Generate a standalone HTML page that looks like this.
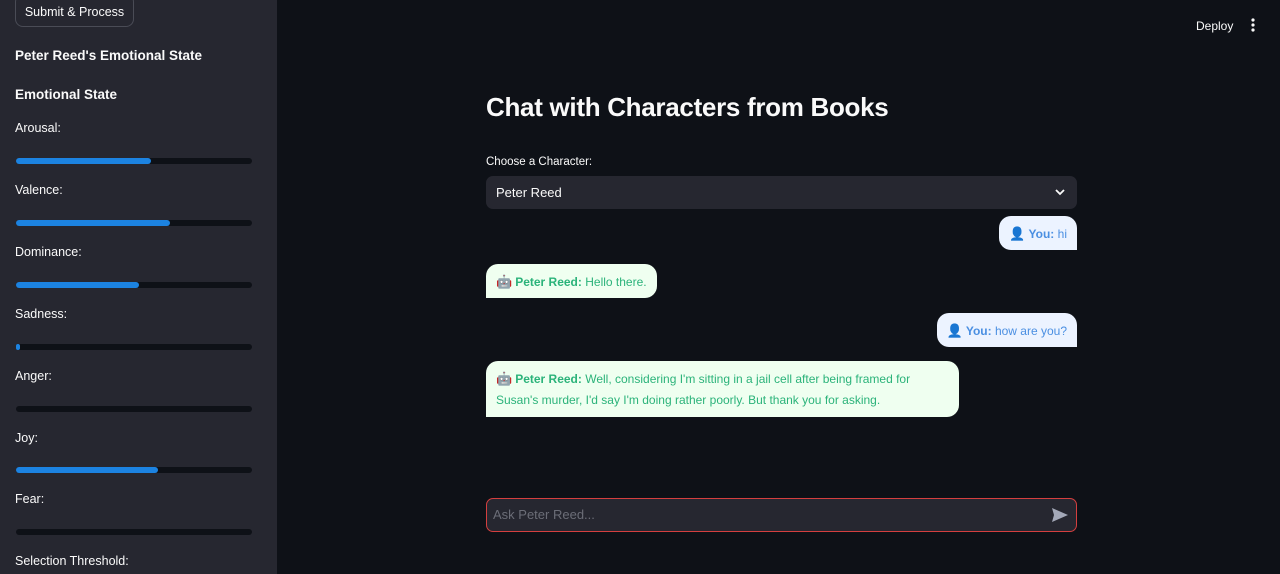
<!DOCTYPE html>
<html><head><meta charset="utf-8"><style>
*{margin:0;padding:0;box-sizing:border-box}
body{width:1280px;height:574px;overflow:hidden;background:#0e1117;font-family:"Liberation Sans",sans-serif;color:#fafafa;position:relative}
.sb{position:absolute;left:0;top:0;width:277px;height:574px;background:#262730}
.btn{position:absolute;left:15px;top:-6px;width:119px;height:33px;border:1px solid #4a4c56;border-radius:8px;font-size:12.5px;color:#fafafa;text-align:center;line-height:34px}
.h{position:absolute;left:15px;font-size:13.5px;font-weight:bold}
.lab{position:absolute;left:15px;font-size:12.5px}
.bar{position:absolute;left:16px;width:236px;height:6px;border-radius:3px;background:#0e1117}
.bar i{display:block;height:6px;border-radius:3px;background:#1c83e1}
.t{position:absolute;font-size:12px}
h1{position:absolute;left:486px;top:92px;font-size:26px;font-weight:bold;letter-spacing:-0.3px}
.sel{position:absolute;left:486px;top:176px;width:591px;height:33px;background:#262730;border-radius:7px;font-size:13px;padding-left:10px;line-height:33px}
.b{position:absolute;font-size:12px;line-height:21px;padding:7px 10px 6px}
.u{background:#ecf3ff;color:#4a8fe2;border-radius:12px 12px 0 12px}
.r{background:#effff0;color:#2bb37a;border-radius:12px 12px 12px 0}
.u b,.r b{font-weight:bold}
.ic{display:inline-block;font-size:13px;margin-right:3px}
.inp{position:absolute;left:486px;top:498px;width:591px;height:34px;border:1px solid #d43f3f;border-radius:7px;background:#262730;font-size:13px;color:#6b6d77;line-height:32px;padding-left:6px}
</style></head><body>
<div class="sb">
<div class="btn">Submit &amp; Process</div>
<div class="h" style="top:48px">Peter Reed's Emotional State</div>
<div class="h" style="top:87px">Emotional State</div>
<div class="lab" style="top:121px">Arousal:</div><div class="bar" style="top:158px"><i style="width:135px"></i></div>
<div class="lab" style="top:183px">Valence:</div><div class="bar" style="top:220px"><i style="width:154px"></i></div>
<div class="lab" style="top:245px">Dominance:</div><div class="bar" style="top:282px"><i style="width:123px"></i></div>
<div class="lab" style="top:307px">Sadness:</div><div class="bar" style="top:344px"><i style="width:4px"></i></div>
<div class="lab" style="top:369px">Anger:</div><div class="bar" style="top:406px"></div>
<div class="lab" style="top:431px">Joy:</div><div class="bar" style="top:467px"><i style="width:142px"></i></div>
<div class="lab" style="top:492px">Fear:</div><div class="bar" style="top:529px"></div>
<div class="lab" style="top:554px">Selection Threshold:</div>
</div>
<div class="t" style="left:1196px;top:19px">Deploy</div>
<svg style="position:absolute;left:1251px;top:18px" width="4" height="14"><circle cx="2" cy="2" r="1.6" fill="#fafafa"/><circle cx="2" cy="7" r="1.6" fill="#fafafa"/><circle cx="2" cy="12" r="1.6" fill="#fafafa"/></svg>
<h1>Chat with Characters from Books</h1>
<div class="t" style="left:486px;top:156px;font-size:11.5px">Choose a Character:</div>
<div class="sel">Peter Reed<svg style="position:absolute;right:12px;top:12px" width="10" height="8"><path d="M1 2l4 4 4-4" stroke="#fafafa" stroke-width="1.8" fill="none"/></svg></div>
<div class="b u" style="right:203px;top:216px;height:34px"><span class="ic">👤</span><b>You:</b> hi</div>
<div class="b r" style="left:486px;top:264px;height:34px"><span class="ic">🤖</span><b>Peter Reed:</b> Hello there.</div>
<div class="b u" style="right:203px;top:313px;height:34px"><span class="ic">👤</span><b>You:</b> how are you?</div>
<div class="b r" style="left:486px;top:361px;width:473px;height:56px"><span class="ic">🤖</span><b>Peter Reed:</b> Well, considering I'm sitting in a jail cell after being framed for Susan's murder, I'd say I'm doing rather poorly. But thank you for asking.</div>
<div class="inp">Ask Peter Reed...<svg style="position:absolute;right:8px;top:9px" width="16" height="14"><path d="M0 0L16 7 0 14 2 7z" fill="#a3a8b8"/></svg></div>
</body></html>
